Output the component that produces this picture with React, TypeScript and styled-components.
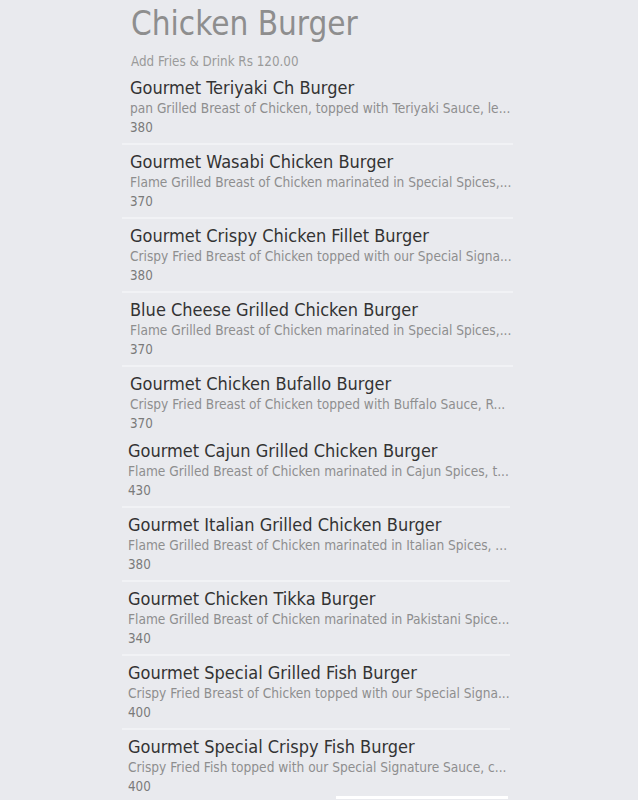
import styled, { createGlobalStyle } from 'styled-components';

interface MenuItem {
  name: string;
  description: string;
  price: number;
}

const firstGroup: MenuItem[] = [
  {
    name: 'Gourmet Teriyaki Ch Burger',
    description: 'pan Grilled Breast of Chicken, topped with Teriyaki Sauce, le...',
    price: 380,
  },
  {
    name: 'Gourmet Wasabi Chicken Burger',
    description: 'Flame Grilled Breast of Chicken marinated in Special Spices,...',
    price: 370,
  },
  {
    name: 'Gourmet Crispy Chicken Fillet Burger',
    description: 'Crispy Fried Breast of Chicken topped with our Special Signa...',
    price: 380,
  },
  {
    name: 'Blue Cheese Grilled Chicken Burger',
    description: 'Flame Grilled Breast of Chicken marinated in Special Spices,...',
    price: 370,
  },
  {
    name: 'Gourmet Chicken Bufallo Burger',
    description: 'Crispy Fried Breast of Chicken topped with Buffalo Sauce, R...',
    price: 370,
  },
];

const secondGroup: MenuItem[] = [
  {
    name: 'Gourmet Cajun Grilled Chicken Burger',
    description: 'Flame Grilled Breast of Chicken marinated in Cajun Spices, t...',
    price: 430,
  },
  {
    name: 'Gourmet Italian Grilled Chicken Burger',
    description: 'Flame Grilled Breast of Chicken marinated in Italian Spices, ...',
    price: 380,
  },
  {
    name: 'Gourmet Chicken Tikka Burger',
    description: 'Flame Grilled Breast of Chicken marinated in Pakistani Spice...',
    price: 340,
  },
  {
    name: 'Gourmet Special Grilled Fish Burger',
    description: 'Crispy Fried Breast of Chicken topped with our Special Signa...',
    price: 400,
  },
  {
    name: 'Gourmet Special Crispy Fish Burger',
    description: 'Crispy Fried Fish topped with our Special Signature Sauce, c...',
    price: 400,
  },
];

const GlobalStyle = createGlobalStyle`
  html, body {
    margin: 0;
    padding: 0;
    background: #e9eaee;
    height: 800px;
    overflow: hidden;
  }
  body {
    font-family: 'DejaVu Sans', Verdana, sans-serif;
    font-stretch: condensed;
  }
`;

const Page = styled.div`
  width: 638px;
  height: 800px;
  background: #e9eaee;
  display: flex;
  flex-direction: column;
  padding-left: 122px;
  box-sizing: border-box;
`;

const Heading = styled.h1`
  margin: 0;
  padding: 4px 0 0 9px;
  font-size: 33px;
  line-height: 40px;
  font-weight: normal;
  color: #8e8e8e;
`;

const Extra = styled.div`
  padding: 9px 0 0 9px;
  font-size: 13.3px;
  line-height: 18px;
  color: #9a9a9a;
`;

const List = styled.ul<{ $width: number; $inset: number; $gap: number }>`
  list-style: none;
  margin: ${(p) => p.$gap}px 0 0;
  padding: 0;
  width: ${(p) => p.$width}px;

  & > li {
    padding-left: ${(p) => p.$inset}px;
  }
`;

const Item = styled.li<{ $last?: boolean }>`
  display: flex;
  flex-direction: column;
  padding-top: 6px;
  padding-bottom: ${(p) => (p.$last ? '0' : '6px')};
  border-bottom: ${(p) => (p.$last ? 'none' : '2px solid #f1f2f5')};
`;

const Name = styled.div`
  font-size: 18px;
  line-height: 22px;
  color: #333333;
  white-space: nowrap;
`;

const Description = styled.div`
  font-size: 13.6px;
  line-height: 19px;
  color: #8e8e8e;
  white-space: nowrap;
  overflow: hidden;
  text-overflow: ellipsis;
`;

const Price = styled.div`
  font-size: 13.3px;
  line-height: 19px;
  color: #7a7a7a;
`;

const BottomBar = styled.div`
  align-self: flex-start;
  margin: 0 0 0 214px;
  width: 172px;
  height: 3px;
  background: #ffffff;
`;

function MenuList({
  items,
  width,
  inset,
  gap,
}: {
  items: MenuItem[];
  width: number;
  inset: number;
  gap: number;
}) {
  return (
    <List $width={width} $inset={inset} $gap={gap}>
      {items.map((item, i) => (
        <Item key={item.name} $last={i === items.length - 1}>
          <Name>{item.name}</Name>
          <Description>{item.description}</Description>
          <Price>{item.price}</Price>
        </Item>
      ))}
    </List>
  );
}

export default function App() {
  return (
    <>
      <GlobalStyle />
      <Page>
        <Heading>Chicken Burger</Heading>
        <Extra>Add Fries &amp; Drink Rs 120.00</Extra>
        <MenuList items={firstGroup} width={391} inset={8} gap={0} />
        <MenuList items={secondGroup} width={388} inset={6} gap={1} />
        <BottomBar />
      </Page>
    </>
  );
}
